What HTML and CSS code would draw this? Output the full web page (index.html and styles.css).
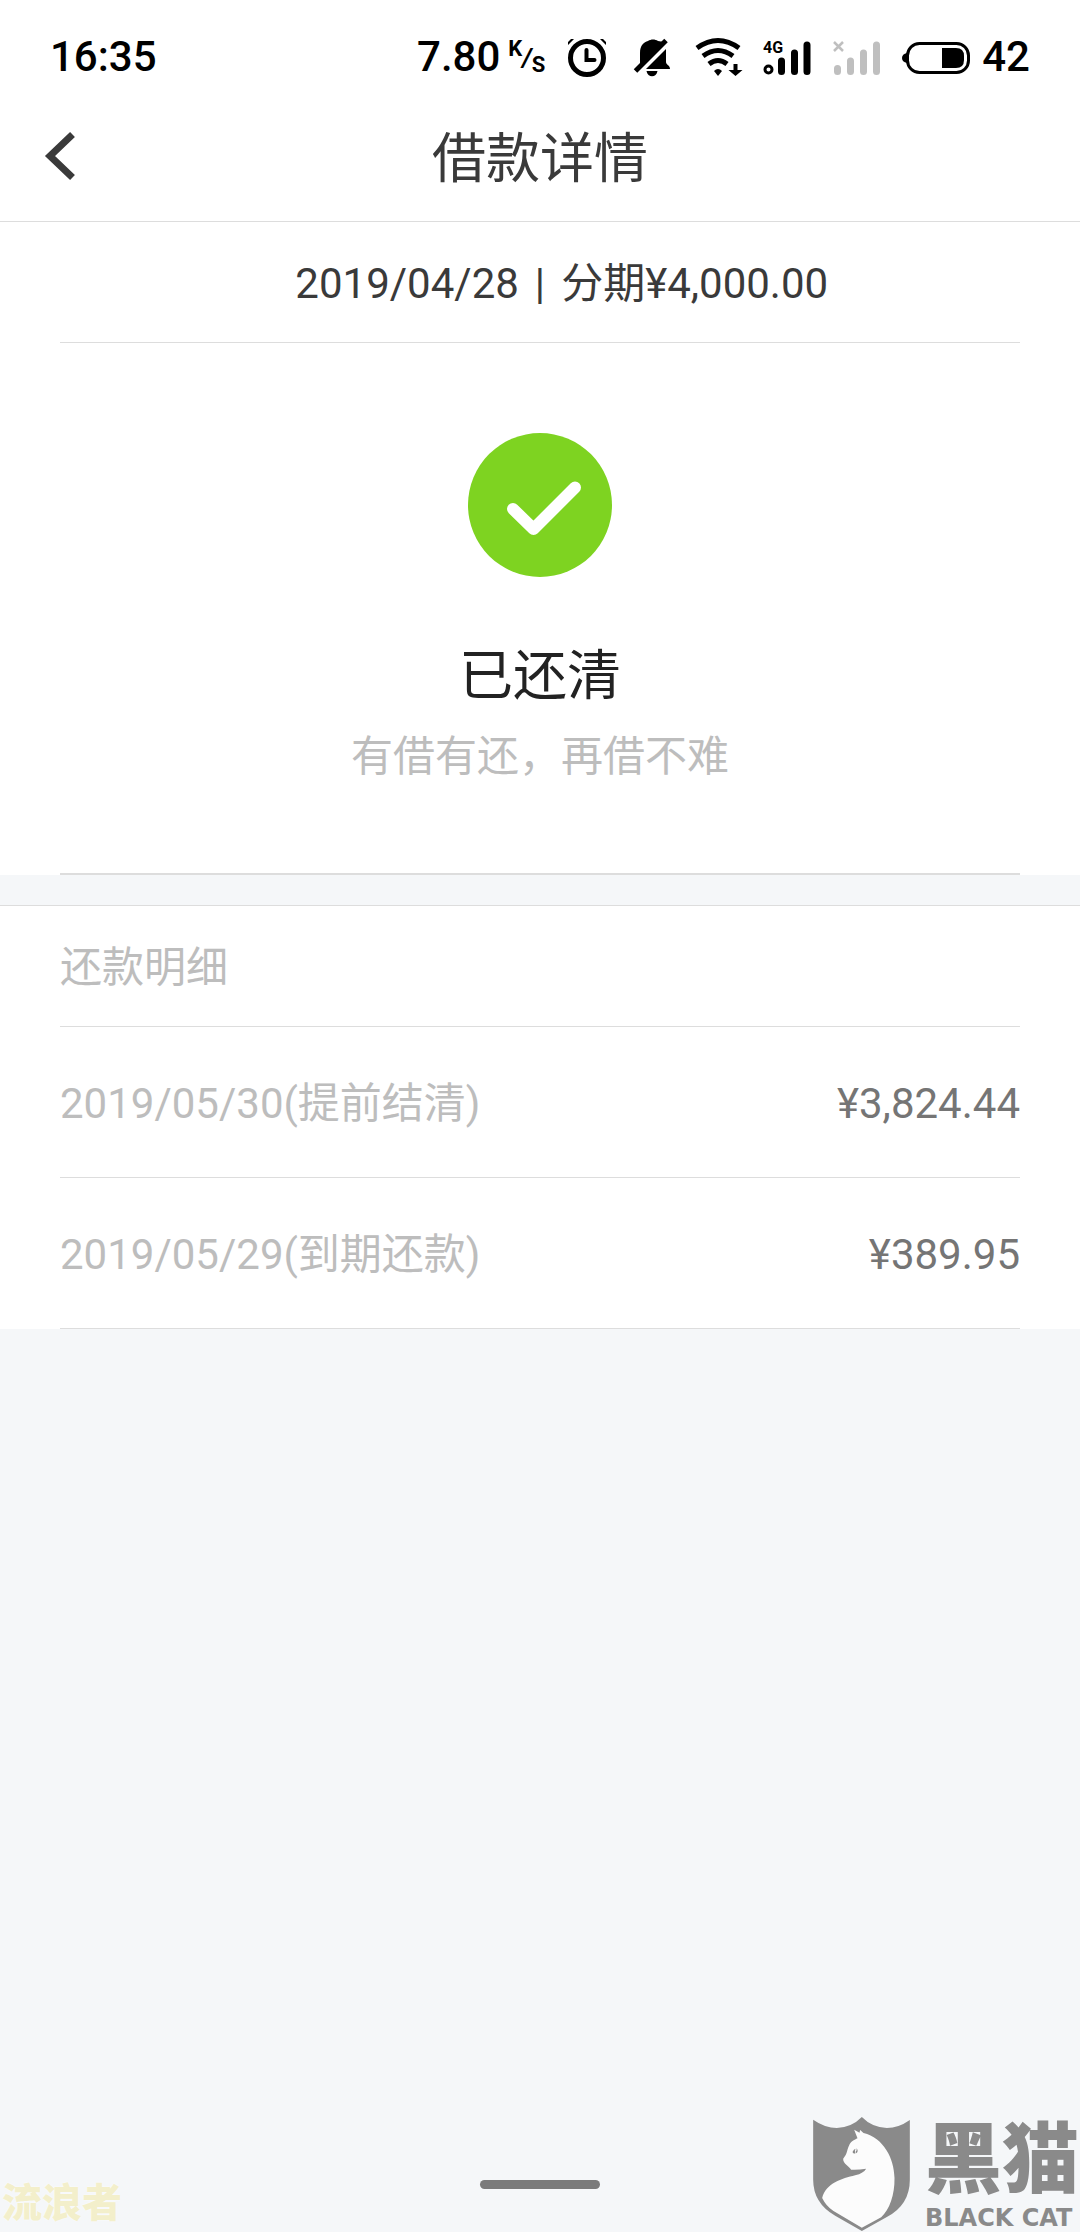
FILE: index.html
```html
<!DOCTYPE html>
<html lang="zh-CN">
<head>
  <meta charset="UTF-8">
  <meta name="viewport" content="width=device-width, initial-scale=1">
  <title>借款详情</title>
  <link rel="stylesheet" href="styles.css">
</head>
<body>

  <!-- Status bar -->
  <div class="status-bar">
    <span class="time">16:35</span>
    <div class="status-icons">
      <div class="speed">
        <span>7.80</span>
        <span class="unit"><sup>K</sup><i>/</i><sub>S</sub></span>
      </div>
      <svg width="40" height="48" viewBox="0 0 40 48" fill="none" stroke="#000">
        <circle cx="20" cy="25" r="16.5" stroke-width="5"/>
        <path d="M19.5 17v10h8" stroke-width="4" stroke-linecap="round"/>
        <path d="M1 12V9l3-3h3zM39 12V9l-3-3h-3z" fill="#000" stroke="none"/>
      </svg>
      <svg width="41" height="48" viewBox="3 0 41 48">
        <path d="M9 38 14 31V20C14 12 18 9 22 8 25 6 29 6 32 8L38 9z"/>
        <path d="M20 36 40 16V29C40 32 44 32 44 36z"/>
        <path d="M20.5 38h11c-1 7-10 7-11 0z"/>
        <path d="M9.5 38 40 7.5" stroke="#000" stroke-width="5"/>
      </svg>
      <svg width="48" height="48" viewBox="0 0 48 48" fill="none" stroke="#000">
        <path d="M5 15Q26 0 47 15" stroke-width="5"/>
        <path d="M11 23Q26 12 41 23" stroke-width="5"/>
        <path d="M17 31Q26 24 35 31" stroke-width="5"/>
        <path d="M22 38q4-4 8 0l-4 5z" fill="#000" stroke="none"/>
        <path d="M41.5 31h4v6h5l-7 6-7-6h5z" fill="#000" stroke="none"/>
      </svg>
      <svg width="48" height="48" viewBox="0 0 48 48">
        <text class="net" x="1" y="20">4G</text>
        <circle cx="6.5" cy="36.5" r="3.5" fill="none" stroke="#000" stroke-width="3"/>
        <path d="M19.5 28v10.5M32.5 20v18.5M45 12v26.5" stroke="#000" stroke-width="7" stroke-linecap="round"/>
      </svg>
      <svg width="48" height="48" viewBox="0 0 48 48" fill="none" stroke="#bfbfbf">
        <path d="M2 9l9 9M11 9l-9 9" stroke-width="2.5"/>
        <path d="M5.5 35.5v3M18.5 28v10.5M31.5 20v18.5M44.5 12v26.5" stroke-width="7" stroke-linecap="round"/>
      </svg>
      <div class="battery">
        <svg width="68" height="48" viewBox="0 0 68 48">
          <rect x="5.5" y="10.5" width="61" height="29" rx="12" fill="none" stroke="#000" stroke-width="3"/>
          <path d="M5 20Q0 21 0 25T5 30z"/>
          <path d="M40 15h14q8 0 8 8v4q0 8-8 8H40z"/>
        </svg>
        <span>42</span>
      </div>
    </div>
  </div>

  <!-- Title bar -->
  <header class="title-bar">
    <button class="back" aria-label="返回">
      <svg width="30" height="48" viewBox="0 0 30 48" fill="none" stroke="#3a3a3a" stroke-width="7">
        <path d="M27.5 2.5 5 24l22.5 21.5"/>
      </svg>
    </button>
    <h1>借款详情</h1>
  </header>

  <!-- Loan summary -->
  <section class="card">
    <div class="summary">
      <span class="date">2019/04/28</span>
      <span>|</span>
      <span>分期¥4,000.00</span>
    </div>
    <div class="result">
      <svg width="144" height="144" viewBox="0 0 144 144">
        <circle cx="72" cy="72" r="72" fill="#7ed321"/>
        <path d="M45 76l20.5 20L107 54.5" fill="none" stroke="#fff" stroke-width="12" stroke-linecap="round" stroke-linejoin="round"/>
      </svg>
      <h2>已还清</h2>
      <p>有借有还，再借不难</p>
    </div>
  </section>

  <!-- Repayment list -->
  <section class="card details">
    <h3>还款明细</h3>
    <table>
      <tr>
        <td>2019/05/30(提前结清)</td>
        <td class="amount">¥3,824.44</td>
      </tr>
      <tr>
        <td>2019/05/29(到期还款)</td>
        <td class="amount">¥389.95</td>
      </tr>
    </table>
  </section>

  <footer class="bottom">
    <span class="user-mark">流浪者</span>
    <div class="home-bar"></div>
    <div class="logo">
      <svg width="97" height="114" viewBox="64 82 290 342">
        <path fill="#8a8a8a" d="M64 90Q100 115 135 115 180 113 210 82 240 113 285 115 320 115 354 91V270Q354 345 285 382L210 424 130 378Q64 340 64 270z"/>
        <path fill="#fcfcfc" d="M187 120 203 129 205 121 215 130C275 145 307 205 308 265 309 315 293 360 268 383L210 414 125 364Q103 350 91 325C103 280 150 267 190 257Q216 250 223 237 200 241 178 240C172 230 153 221 154 207 167 192 164 184 172 167 178 153 188 151 197 146z"/>
        <path fill="#8a8a8a" d="M182 187q4-9 9-10-4 7 0 14-7 2-9-4zM194 176q7 8 0 15-3-3-2-6 4-2 2-9z"/>
      </svg>
      <div class="logo-text">
        <strong>黑猫</strong>
        <span>BLACK CAT</span>
      </div>
    </div>
  </footer>

</body>
</html>
```

FILE: styles.css
```css
* { box-sizing: border-box; margin: 0; padding: 0; }
body { display: flex; flex-direction: column; min-height: 100vh; background: #f5f7f9; color: #3a3a3a; font-family: Roboto, "Noto Sans CJK SC", sans-serif; font-size: 42px; line-height: 60px; }
h1, h2, h3 { font-weight: 400; }
svg { display: block; flex: none; overflow: visible; }

/* status bar */
.status-bar { display: flex; justify-content: space-between; align-items: center; height: 90px; padding: 24px 50px 0; background: #fff; color: #000; font-weight: 500; }
.status-icons { display: flex; align-items: center; gap: 22px; }
.speed { display: flex; align-items: center; gap: 8px; }
.unit { display: flex; height: 36px; font-weight: 700; }
.unit sup, .unit sub { font-size: 22px; line-height: 20px; }
.unit sub { align-self: flex-end; }
.unit i { font-size: 26px; line-height: 36px; }
.net { font-size: 16px; font-weight: 700; }
.battery { display: flex; align-items: center; gap: 12px; }

/* title bar */
.title-bar { display: grid; grid-template-columns: 1fr auto 1fr; align-items: center; height: 132px; padding: 0 45px; background: #fff; border-bottom: 1px solid #ddd; }
.title-bar h1 { padding-top: 8px; font-size: 54px; line-height: 80px; }
.back { justify-self: start; background: none; border: none; cursor: pointer; }

.card { padding: 0 60px; background: #fff; }
.summary { display: grid; grid-template-columns: 1fr auto 1fr; gap: 16px; padding: 32px 0 28px; border-bottom: 1px solid #ddd; }
.date { text-align: right; }

.result { display: flex; flex-direction: column; align-items: center; padding: 90px 0 86px; border-bottom: 2px solid #ddd; }
.result h2 { margin-top: 60px; color: #222; font-size: 54px; line-height: 80px; }
.result p { margin-top: 10px; color: #bdbdbd; }

.details { margin-top: 30px; border-top: 1px solid #ddd; color: #bdbdbd; }
.details h3 { padding: 32px 0 28px; border-bottom: 1px solid #ddd; font-size: 42px; }
table { width: 100%; border-spacing: 0; }
td { padding: 47px 0 43px; border-bottom: 1px solid #ddd; }
.amount { color: #757575; text-align: right; }

/* bottom marks */
.bottom { display: grid; grid-template-columns: 1fr auto 1fr; align-items: end; margin-top: auto; }
.user-mark { padding-left: 2px; color: #f3efcb; font-size: 40px; font-weight: 900; line-height: 56px; text-shadow: 0 0 2px #fff; }
.home-bar { width: 120px; height: 9px; margin-bottom: 43px; border-radius: 5px; background: #7b7b7b; }
.logo { display: flex; justify-self: end; gap: 15px; padding: 0 1px 1px 0; color: #8a8a8a; }
.logo-text { display: flex; flex-direction: column; }
.logo-text strong { font-size: 77px; font-weight: 900; line-height: 88px; }
.logo-text span { font-family: "DejaVu Sans", sans-serif; font-size: 24px; font-weight: 700; line-height: 26px; white-space: nowrap; }
```
